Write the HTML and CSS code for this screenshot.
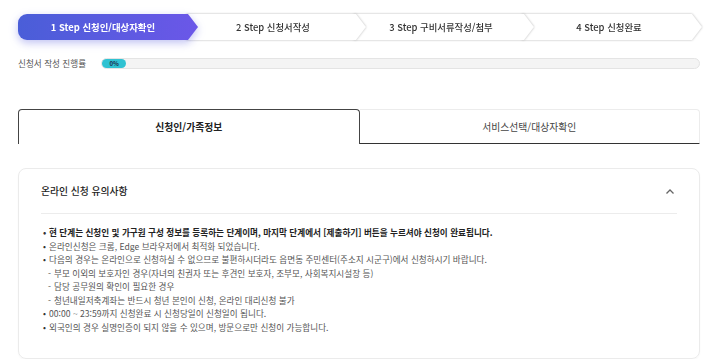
FILE: index.html
```html
<!DOCTYPE html>
<html lang="ko">
<head>
    <meta charset="UTF-8">
    <meta name="viewport" content="width=device-width, initial-scale=1.0">
    <title>온라인 신청</title>
    <link rel="stylesheet" href="styles.css">
</head>
<body>
    <div class="container">
        <ol class="steps">
            <li class="step active"><span class="step-shape">1 Step 신청인/대상자확인</span></li>
            <li class="step"><span class="step-shape">2 Step 신청서작성</span></li>
            <li class="step"><span class="step-shape">3 Step 구비서류작성/첨부</span></li>
            <li class="step"><span class="step-shape">4 Step 신청완료</span></li>
        </ol>

        <div class="progress">
            <span class="progress-label">신청서 작성 진행률</span>
            <div class="progress-bar">
                <span class="progress-fill">0%</span>
            </div>
        </div>

        <div class="tabs">
            <button class="tab active">신청인/가족정보</button>
            <button class="tab">서비스선택/대상자확인</button>
        </div>

        <div class="notice">
            <div class="notice-head">
                <h2>온라인 신청 유의사항</h2>
                <svg class="chevron" width="10" height="7" viewBox="0 0 10 7">
                    <path d="M1.5 5.5 L5 2 L8.5 5.5" fill="none" stroke="#666" stroke-width="1.3"/>
                </svg>
            </div>
            <ul class="notice-list">
                <li class="strong">현 단계는 신청인 및 가구원 구성 정보를 등록하는 단계이며, 마지막 단계에서 [제출하기] 버튼을 누르셔야 신청이 완료됩니다.</li>
                <li>온라인신청은 크롬, Edge 브라우저에서 최적화 되었습니다.</li>
                <li>다음의 경우는 온라인으로 신청하실 수 없으므로 불편하시더라도 읍면동 주민센터(주소지 시군구)에서 신청하시기 바랍니다.</li>
                <li class="sub">부모 이외의 보호자인 경우(자녀의 친권자 또는 후견인 보호자, 조부모, 사회복지시설장 등)</li>
                <li class="sub">담당 공무원의 확인이 필요한 경우</li>
                <li class="sub">청년내일저축계좌는 반드시 청년 본인이 신청, 온라인 대리신청 불가</li>
                <li>00:00 ~ 23:59까지 신청완료 시 신청당일이 신청일이 됩니다.</li>
                <li>외국인의 경우 실명인증이 되지 않을 수 있으며, 방문으로만 신청이 가능합니다.</li>
            </ul>
        </div>
    </div>
</body>
</html>
```

FILE: styles.css
```css
body {
    margin: 0;
    background: #fff;
    font-family: "Noto Sans CJK KR", "Noto Sans", sans-serif;
    color: #333;
}

.container {
    padding: 14px 18px 0;
}

/* step indicator */
.steps {
    display: flex;
    list-style: none;
    margin: 0;
    padding: 0;
}

.step {
    flex: 0 0 180px;
    margin-left: -12px;
    position: relative;
    filter: drop-shadow(0 0 0.8px #b5b5b5);
}

.step:first-child {
    margin-left: 0;
    z-index: 4;
}

.step:nth-child(2) { z-index: 3; }
.step:nth-child(3) { z-index: 2; }
.step:nth-child(4) { z-index: 1; }

.step-shape {
    display: flex;
    align-items: center;
    justify-content: center;
    height: 26px;
    padding-right: 10px;
    padding-left: 4px;
    background: #fff;
    font-size: 9.4px;
    font-weight: 500;
    color: #333;
    clip-path: polygon(0 0, calc(100% - 10px) 0, 100% 50%, calc(100% - 10px) 100%, 0 100%);
}

.step.active {
    filter: drop-shadow(0 3px 4px rgba(76, 84, 220, 0.35));
}

.step.active .step-shape {
    background: linear-gradient(90deg, #4a5ed8, #6b57e8);
    color: #fff;
    font-weight: 700;
    border-radius: 9px 0 0 9px;
    padding-left: 0;
}

/* progress */
.progress {
    display: flex;
    align-items: center;
    gap: 15px;
    margin-top: 17px;
}

.progress-label {
    font-size: 8.6px;
    color: #555;
    white-space: nowrap;
}

.progress-bar {
    flex: 1;
    height: 9px;
    border: 1px solid #e4e4e4;
    border-radius: 6px;
    background: #f4f4f4;
    display: flex;
    align-items: center;
}

.progress-fill {
    width: 24px;
    height: 9px;
    border-radius: 5px;
    background: #2fc2d2;
    color: #1d2a4a;
    font-size: 6px;
    font-weight: 700;
    display: flex;
    align-items: center;
    justify-content: center;
}

/* tabs */
.tabs {
    display: flex;
    margin-top: 40px;
}

.tab {
    flex: 1;
    height: 35px;
    font-family: inherit;
    font-size: 9.8px;
    color: #444;
    background: #fff;
    border: 1px solid #ececec;
    border-left: none;
    border-bottom: 1px solid #333;
    border-radius: 0 4px 0 0;
    padding: 0;
}

.tab.active {
    font-weight: 700;
    color: #222;
    border: 1px solid #444;
    border-bottom: none;
    border-radius: 4px 4px 0 0;
}

/* notice card */
.notice {
    margin-top: 24px;
    border: 1px solid #ebebeb;
    border-radius: 8px;
    padding: 0 22px 24px;
    box-shadow: 0 1px 2px rgba(0, 0, 0, 0.03);
}

.notice-head {
    display: flex;
    justify-content: space-between;
    align-items: center;
    height: 44px;
    border-bottom: 1px solid #ececec;
}

.notice-head h2 {
    margin: 0;
    font-size: 9.8px;
    font-weight: 500;
    color: #222;
}

.chevron {
    margin-right: 2px;
}

.notice-list {
    list-style: none;
    margin: 12px 0 0;
    padding: 0 0 0 2px;
}

.notice-list li {
    font-size: 8.6px;
    line-height: 13.5px;
    color: #555;
}

.notice-list li::before {
    content: "•";
    display: inline-block;
    width: 6px;
    color: #333;
}

.notice-list li.strong {
    font-weight: 700;
    color: #222;
}

.notice-list li.sub::before {
    content: "-";
    width: auto;
    margin: 0 3px 0 5px;
    color: #555;
}
```
